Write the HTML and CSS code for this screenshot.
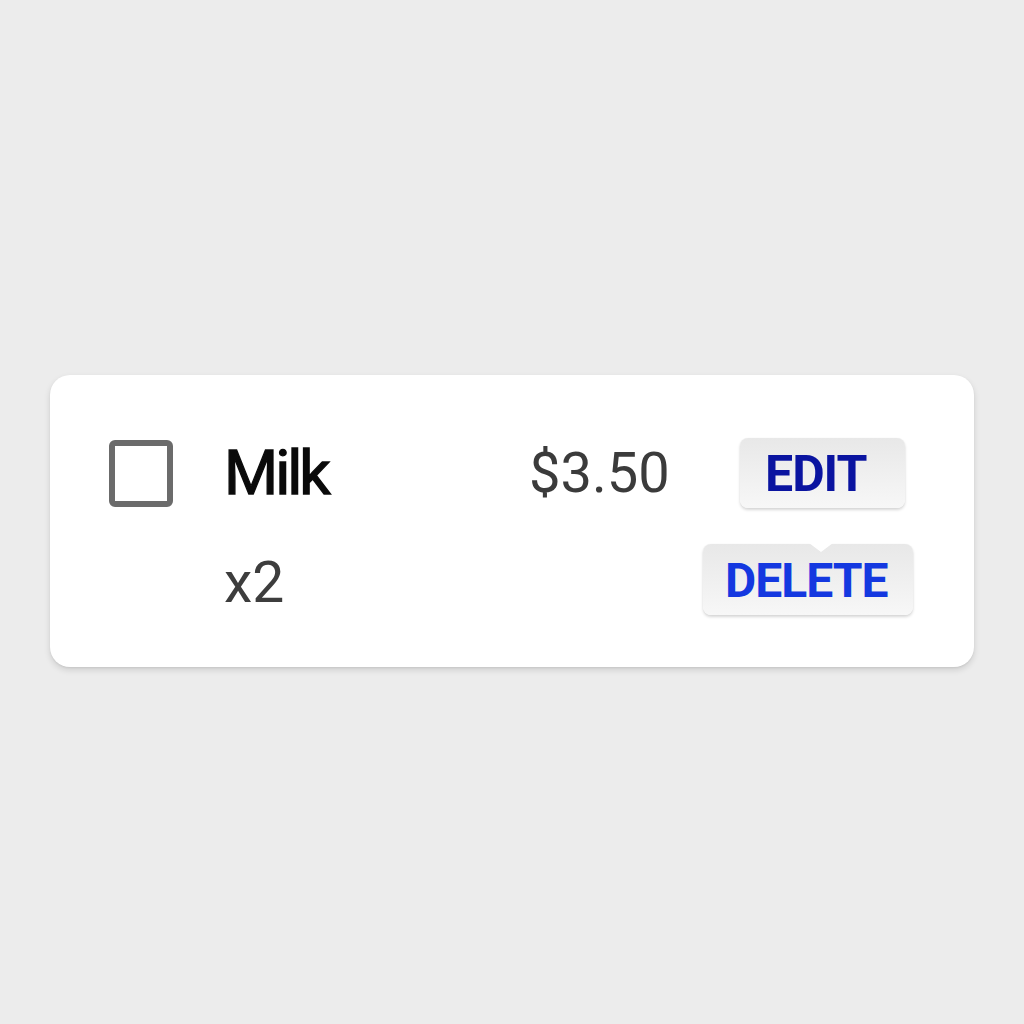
FILE: index.html
```html
<!DOCTYPE html>
<html lang="en">
<head>
<meta charset="utf-8">
<title>Shopping item</title>
<link rel="stylesheet" href="styles.css">
</head>
<body>
<div class="page">
  <div class="card">
    <div class="row row-main">
      <span class="checkbox" role="checkbox" aria-checked="false"></span>
      <span class="name">Milk</span>
      <span class="price">$3.50</span>
      <button class="btn btn-edit">EDIT</button>
    </div>
    <div class="row row-sub">
      <span class="qty">x2</span>
      <button class="btn btn-delete">DELETE</button>
    </div>
  </div>
</div>
</body>
</html>
```

FILE: styles.css
```css
* { box-sizing: border-box; }
html, body { margin: 0; padding: 0; }
body {
  background: #ececec;
  font-family: Roboto, "Liberation Sans", sans-serif;
}
.page {
  width: 1024px;
  height: 1024px;
  padding: 375px 50px 0 50px;
}
.card {
  width: 924px;
  height: 292px;
  background: #ffffff;
  border-radius: 20px;
  box-shadow: 0 3px 6px rgba(0,0,0,0.13), 0 1px 2px rgba(0,0,0,0.06);
  padding-top: 63px;
}
.row {
  display: flex;
  align-items: center;
}
.row-main {
  height: 70px;
  padding-left: 59px;
  padding-right: 69px;
}
.row-sub {
  height: 71px;
  margin-top: 36px;
  padding-left: 174px;
  padding-right: 61px;
}
.checkbox {
  flex: 0 0 auto;
  width: 64px;
  height: 67px;
  border: 6px solid #6b6b6b;
  border-radius: 6px;
  background: #fff;
}
.name {
  margin-left: 51px;
  width: 304px;
  font-size: 62px;
  font-weight: 400;
  letter-spacing: -3px;
  -webkit-text-stroke: 1.3px #0a0a0a;
  line-height: 1;
  color: #0a0a0a;
}
.price {
  font-size: 56px;
  font-weight: 400;
  line-height: 1;
  color: #3b3b3b;
  margin-left: 1px;
}
.qty {
  font-size: 57px;
  font-weight: 400;
  line-height: 1;
  color: #3d3d3d;
  margin-top: 6px;
}
.btn {
  margin-left: auto;
  border: none;
  border-radius: 8px;
  background: linear-gradient(#e8e8e8, #f7f7f7);
  box-shadow: 0 2px 3px rgba(0,0,0,0.16), 0 0 1px rgba(0,0,0,0.08);
  font-family: Roboto, "Liberation Sans", sans-serif;
  font-weight: 700;
  line-height: 1;
  text-align: left;
  display: flex;
  align-items: center;
  position: relative;
}
.btn-edit {
  width: 165px;
  height: 70px;
  padding: 2px 0 0 25px;
  font-size: 50px;
  letter-spacing: -1px;
  color: #0a14a0;
}
.btn-delete {
  width: 210px;
  height: 71px;
  padding: 2px 0 0 22px;
  font-size: 48px;
  letter-spacing: -1px;
  color: #1438e0;
}
.btn-delete::before {
  content: "";
  position: absolute;
  top: -1px;
  left: 106px;
  width: 24px;
  height: 9px;
  background: #ffffff;
  clip-path: polygon(0 0, 100% 0, 50% 100%);
}
```
